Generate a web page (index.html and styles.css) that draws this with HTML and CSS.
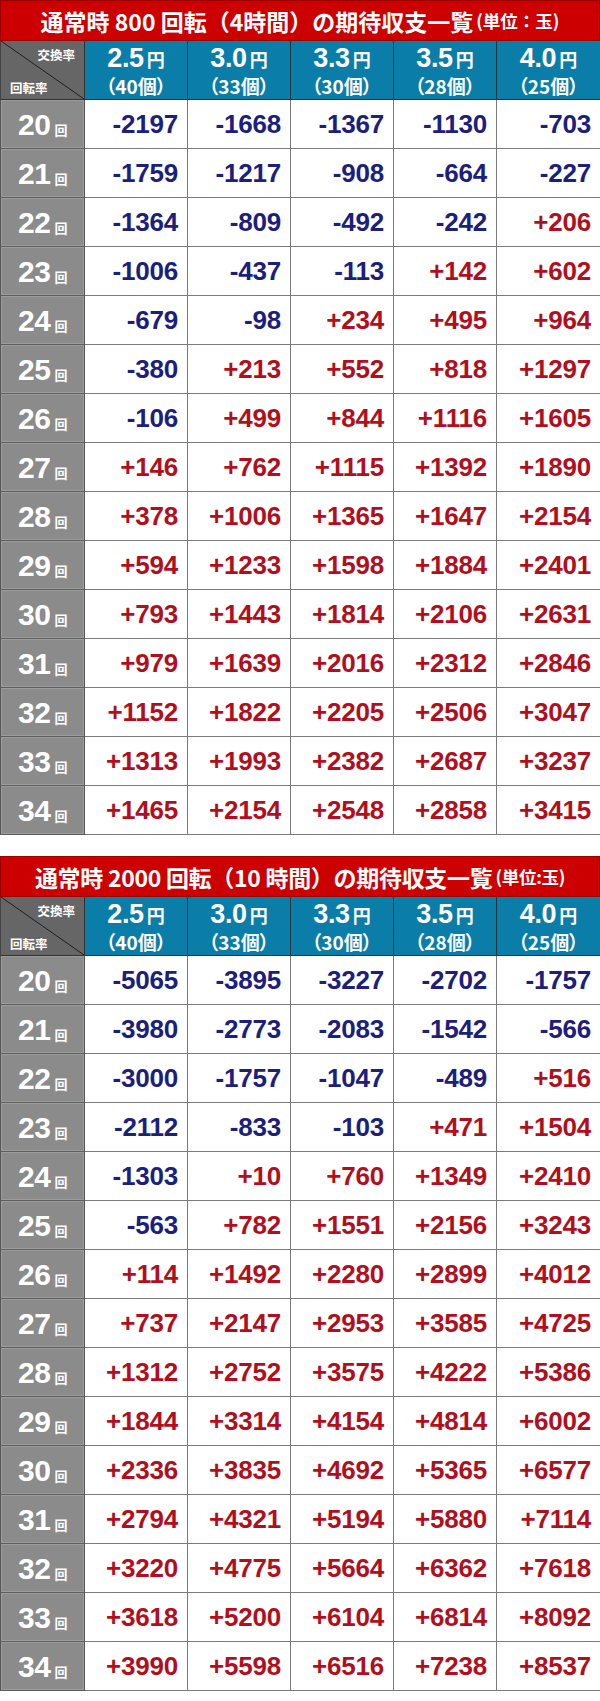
FILE: index.html
```html
<!DOCTYPE html>
<html lang="ja">
<head>
<meta charset="utf-8">
<link rel="stylesheet" href="styles.css">
</head>
<body>
<section class="block">
  <div class="title">通常時 800 回転（4時間）の期待収支一覧 <span class="unit">(単位：玉)</span></div>
  <div class="grid">
    <div class="corner"><span class="c-top">交換率</span><span class="c-bot">回転率</span></div>
    <div class="hd"><div class="l1"><b>2.5</b><i>円</i></div><div class="l2">（40個）</div></div>
    <div class="hd"><div class="l1"><b>3.0</b><i>円</i></div><div class="l2">（33個）</div></div>
    <div class="hd"><div class="l1"><b>3.3</b><i>円</i></div><div class="l2">（30個）</div></div>
    <div class="hd"><div class="l1"><b>3.5</b><i>円</i></div><div class="l2">（28個）</div></div>
    <div class="hd last"><div class="l1"><b>4.0</b><i>円</i></div><div class="l2">（25個）</div></div>

    <div class="rh">20<i>回</i></div><div class="n">-2197</div><div class="n">-1668</div><div class="n">-1367</div><div class="n">-1130</div><div class="n last">-703</div>
    <div class="rh">21<i>回</i></div><div class="n">-1759</div><div class="n">-1217</div><div class="n">-908</div><div class="n">-664</div><div class="n last">-227</div>
    <div class="rh">22<i>回</i></div><div class="n">-1364</div><div class="n">-809</div><div class="n">-492</div><div class="n">-242</div><div class="p last">+206</div>
    <div class="rh">23<i>回</i></div><div class="n">-1006</div><div class="n">-437</div><div class="n">-113</div><div class="p">+142</div><div class="p last">+602</div>
    <div class="rh">24<i>回</i></div><div class="n">-679</div><div class="n">-98</div><div class="p">+234</div><div class="p">+495</div><div class="p last">+964</div>
    <div class="rh">25<i>回</i></div><div class="n">-380</div><div class="p">+213</div><div class="p">+552</div><div class="p">+818</div><div class="p last">+1297</div>
    <div class="rh">26<i>回</i></div><div class="n">-106</div><div class="p">+499</div><div class="p">+844</div><div class="p">+1116</div><div class="p last">+1605</div>
    <div class="rh">27<i>回</i></div><div class="p">+146</div><div class="p">+762</div><div class="p">+1115</div><div class="p">+1392</div><div class="p last">+1890</div>
    <div class="rh">28<i>回</i></div><div class="p">+378</div><div class="p">+1006</div><div class="p">+1365</div><div class="p">+1647</div><div class="p last">+2154</div>
    <div class="rh">29<i>回</i></div><div class="p">+594</div><div class="p">+1233</div><div class="p">+1598</div><div class="p">+1884</div><div class="p last">+2401</div>
    <div class="rh">30<i>回</i></div><div class="p">+793</div><div class="p">+1443</div><div class="p">+1814</div><div class="p">+2106</div><div class="p last">+2631</div>
    <div class="rh">31<i>回</i></div><div class="p">+979</div><div class="p">+1639</div><div class="p">+2016</div><div class="p">+2312</div><div class="p last">+2846</div>
    <div class="rh">32<i>回</i></div><div class="p">+1152</div><div class="p">+1822</div><div class="p">+2205</div><div class="p">+2506</div><div class="p last">+3047</div>
    <div class="rh">33<i>回</i></div><div class="p">+1313</div><div class="p">+1993</div><div class="p">+2382</div><div class="p">+2687</div><div class="p last">+3237</div>
    <div class="rh">34<i>回</i></div><div class="p">+1465</div><div class="p">+2154</div><div class="p">+2548</div><div class="p">+2858</div><div class="p last">+3415</div>
  </div>
</section>

<section class="block second">
  <div class="title">通常時 2000 回転（10 時間）の期待収支一覧 <span class="unit">(単位:玉)</span></div>
  <div class="grid">
    <div class="corner"><span class="c-top">交換率</span><span class="c-bot">回転率</span></div>
    <div class="hd"><div class="l1"><b>2.5</b><i>円</i></div><div class="l2">（40個）</div></div>
    <div class="hd"><div class="l1"><b>3.0</b><i>円</i></div><div class="l2">（33個）</div></div>
    <div class="hd"><div class="l1"><b>3.3</b><i>円</i></div><div class="l2">（30個）</div></div>
    <div class="hd"><div class="l1"><b>3.5</b><i>円</i></div><div class="l2">（28個）</div></div>
    <div class="hd last"><div class="l1"><b>4.0</b><i>円</i></div><div class="l2">（25個）</div></div>

    <div class="rh">20<i>回</i></div><div class="n">-5065</div><div class="n">-3895</div><div class="n">-3227</div><div class="n">-2702</div><div class="n last">-1757</div>
    <div class="rh">21<i>回</i></div><div class="n">-3980</div><div class="n">-2773</div><div class="n">-2083</div><div class="n">-1542</div><div class="n last">-566</div>
    <div class="rh">22<i>回</i></div><div class="n">-3000</div><div class="n">-1757</div><div class="n">-1047</div><div class="n">-489</div><div class="p last">+516</div>
    <div class="rh">23<i>回</i></div><div class="n">-2112</div><div class="n">-833</div><div class="n">-103</div><div class="p">+471</div><div class="p last">+1504</div>
    <div class="rh">24<i>回</i></div><div class="n">-1303</div><div class="p">+10</div><div class="p">+760</div><div class="p">+1349</div><div class="p last">+2410</div>
    <div class="rh">25<i>回</i></div><div class="n">-563</div><div class="p">+782</div><div class="p">+1551</div><div class="p">+2156</div><div class="p last">+3243</div>
    <div class="rh">26<i>回</i></div><div class="p">+114</div><div class="p">+1492</div><div class="p">+2280</div><div class="p">+2899</div><div class="p last">+4012</div>
    <div class="rh">27<i>回</i></div><div class="p">+737</div><div class="p">+2147</div><div class="p">+2953</div><div class="p">+3585</div><div class="p last">+4725</div>
    <div class="rh">28<i>回</i></div><div class="p">+1312</div><div class="p">+2752</div><div class="p">+3575</div><div class="p">+4222</div><div class="p last">+5386</div>
    <div class="rh">29<i>回</i></div><div class="p">+1844</div><div class="p">+3314</div><div class="p">+4154</div><div class="p">+4814</div><div class="p last">+6002</div>
    <div class="rh">30<i>回</i></div><div class="p">+2336</div><div class="p">+3835</div><div class="p">+4692</div><div class="p">+5365</div><div class="p last">+6577</div>
    <div class="rh">31<i>回</i></div><div class="p">+2794</div><div class="p">+4321</div><div class="p">+5194</div><div class="p">+5880</div><div class="p last">+7114</div>
    <div class="rh">32<i>回</i></div><div class="p">+3220</div><div class="p">+4775</div><div class="p">+5664</div><div class="p">+6362</div><div class="p last">+7618</div>
    <div class="rh">33<i>回</i></div><div class="p">+3618</div><div class="p">+5200</div><div class="p">+6104</div><div class="p">+6814</div><div class="p last">+8092</div>
    <div class="rh">34<i>回</i></div><div class="p">+3990</div><div class="p">+5598</div><div class="p">+6516</div><div class="p">+7238</div><div class="p last">+8537</div>
  </div>
</section>
</body>
</html>
```

FILE: styles.css
```css
* { box-sizing: border-box; }
html, body { margin: 0; padding: 0; background: #fff; }
body {
  width: 600px;
  font-family: "Liberation Sans", "Noto Sans CJK JP", sans-serif;
  font-weight: bold;
}
.block { width: 600px; }
.second { margin-top: 21px; }

.title {
  height: 41px;
  background: #cc0000;
  border: 1px solid #9a0000;
  color: #fff;
  font-family: "Noto Sans CJK JP", sans-serif;
  font-weight: 700;
  font-size: 23px;
  line-height: 30px;
  display: flex;
  align-items: center;
  justify-content: center;
  white-space: nowrap;
}
.title .unit { font-size: 17.5px; margin-left: 3px; }
.second .title { letter-spacing: -0.3px; }

.grid {
  display: grid;
  grid-template-columns: 85px repeat(5, 103px);
  grid-template-rows: 59px;
  grid-auto-rows: 49px;
}

.grid > div {
  border-right: 1px solid #7a7a7a;
  border-bottom: 1px solid #7a7a7a;
}
.grid > div.last { border-right: none; }

.corner {
  position: relative;
  border-left: 1px solid #444;
  background: #666 linear-gradient(to top right, transparent calc(50% - 0.8px), #1c1c1c 50%, transparent calc(50% + 0.8px));
  border-right-color: #333 !important;
  border-bottom-color: #333 !important;
  color: #fff;
  font-family: "Noto Sans CJK JP", sans-serif;
  font-size: 12.5px;
}
.c-top { position: absolute; right: 9px; top: 4px; }
.c-bot { position: absolute; left: 9px; bottom: 2px; }

.hd {
  background: #0a7da8;
  border-right-color: #1c3340 !important;
  border-bottom-color: #1c3340 !important;
  color: #fff;
  display: flex;
  flex-direction: column;
  align-items: center;
  justify-content: center;
  gap: 2px;
}
.hd .l1 { display: flex; align-items: baseline; height: 29px; line-height: 29px; }
.hd .l1 b { font-family: "Liberation Sans", sans-serif; font-size: 27px; font-weight: bold; letter-spacing: -0.3px; line-height: 29px; }
.hd .l1 i { font-style: normal; font-family: "Noto Sans CJK JP", sans-serif; font-size: 18px; margin-left: 3px; line-height: 29px; }
.hd .l2 {
  font-family: "Noto Sans CJK JP", sans-serif;
  font-size: 19px;
  line-height: 22px;
  height: 22px;
  font-feature-settings: "palt";
}

.rh {
  background: #8b8b8b;
  border-left: 1px solid #555;
  border-right-color: #555 !important;
  border-bottom-color: #5e5e5e !important;
  box-shadow: inset 0 0 0 1px #9c9c9c;
  color: #fff;
  font-family: "Liberation Sans", sans-serif;
  font-size: 30px;
  display: flex;
  align-items: center;
  justify-content: center;
  letter-spacing: -0.5px;
  padding-top: 1px;
}
.rh i {
  font-style: normal;
  font-family: "Noto Sans CJK JP", sans-serif;
  font-size: 13px;
  margin-left: 4px;
  align-self: center;
  margin-top: 9px;
}

.n, .p {
  background: #fff;
  font-family: "Liberation Sans", sans-serif;
  font-size: 26px;
  display: flex;
  align-items: center;
  justify-content: flex-end;
  padding-right: 9px;
  letter-spacing: -0.2px;
}
.n { color: #1b207d; }
.p { color: #b10f1d; }
```
